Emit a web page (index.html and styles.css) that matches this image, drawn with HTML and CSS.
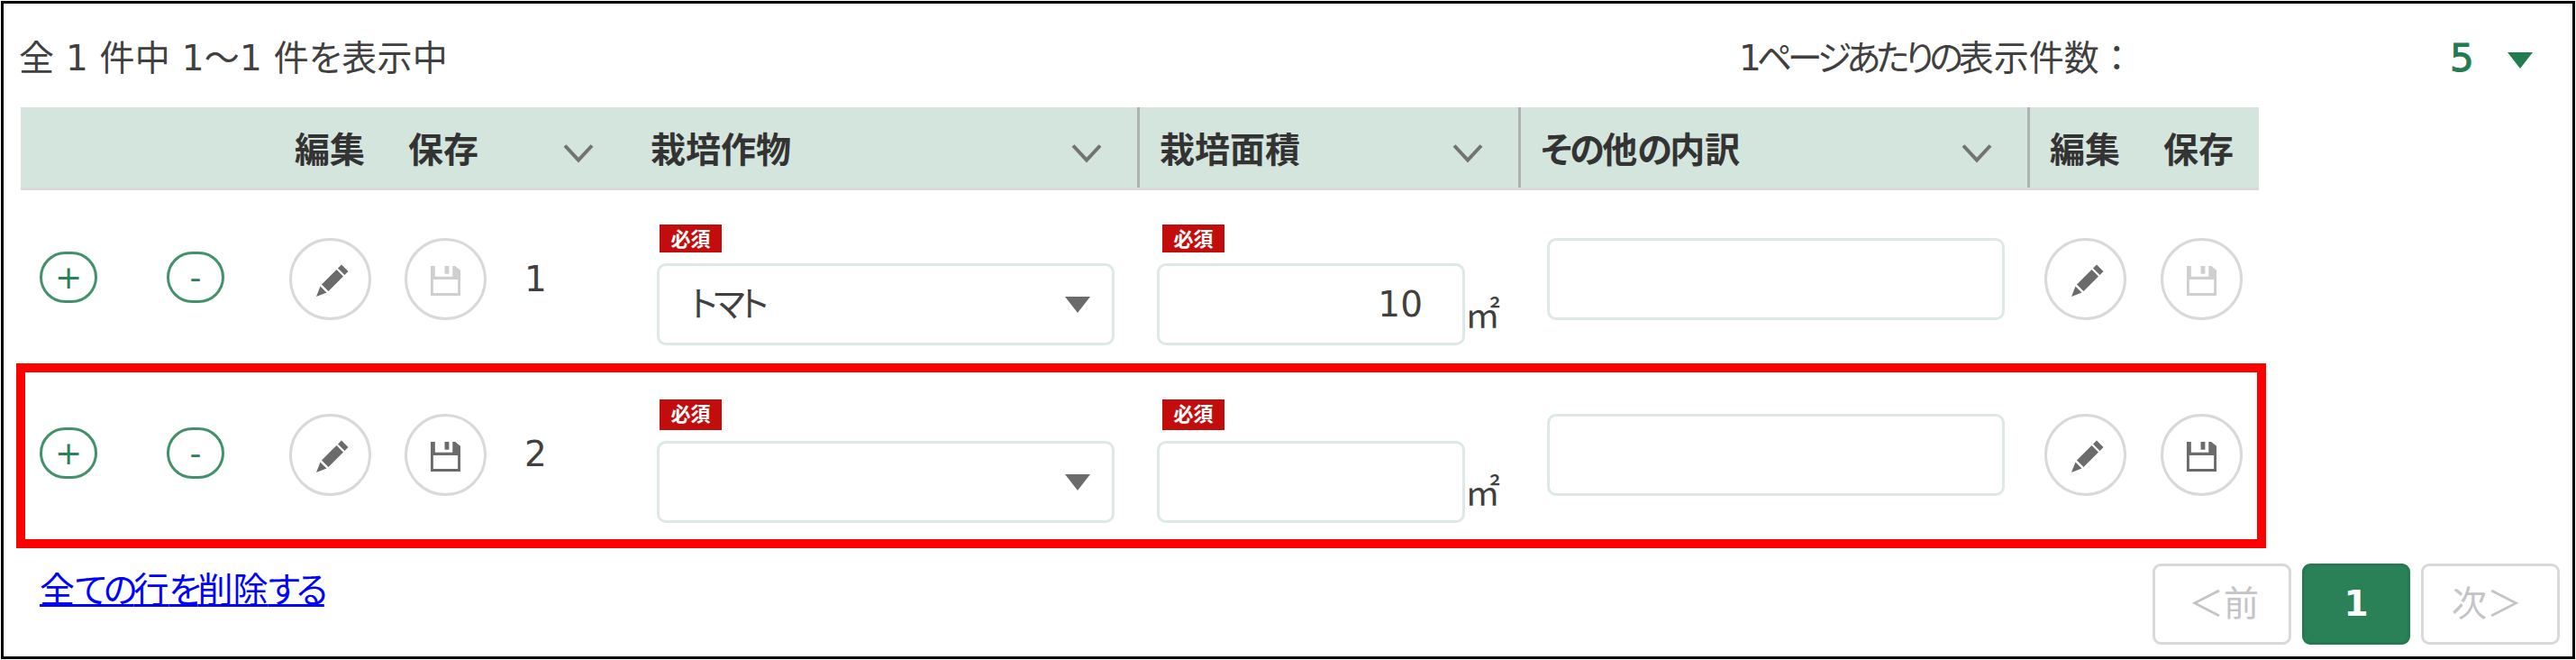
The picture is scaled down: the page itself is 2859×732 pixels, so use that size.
FILE: index.html
```html
<!DOCTYPE html>
<html lang="ja">
<head>
<meta charset="utf-8">
<title>栽培作物一覧</title>
<link rel="stylesheet" href="styles.css">
</head>
<body>
<svg class="symbols" width="0" height="0" aria-hidden="true">
  <symbol id="pencil" viewBox="0 0 38 38">
    <path d="M29 1.5 L36.5 9 L32.5 13 L25 5.5 Z M23.5 7 L31 14.500 L14.500 31 L7 23.500 Z M5.500 25.500 L12.500 32.500 L1 37 Z"/>
  </symbol>
  <symbol id="floppy" viewBox="0 0 36 36">
    <path fill-rule="evenodd" d="M1 1 H6 V13 H26 V1 H29 L35 6 V35 H1 Z M4 16.500 V32 H32 V16.500 Z"/>
    <path d="M17 1 H22 V10 H17 Z"/>
  </symbol>
  <symbol id="chevron" viewBox="0 0 34 22">
    <path class="chevron-line" d="M2 2.500 L17 18.500 L32 2.500"/>
  </symbol>
  <symbol id="triangle" viewBox="0 0 28 18">
    <path d="M0 0 H28 L14 18 Z"/>
  </symbol>
</svg>
<main class="panel">
  <div class="toolbar">
    <p class="summary">全 1 件中 1～1 件を表示中</p>
    <p class="per-page"><span class="kana">1ページあたりの</span>表示件数：</p>
    <div class="page-size"><span>5</span><svg class="tri"><use href="#triangle"/></svg></div>
  </div>

  <div class="table-head">
    <span class="th">編集</span>
    <span class="th">保存</span>
    <svg class="chev"><use href="#chevron"/></svg>
    <div class="th sortable crop"><span>栽培作物</span><svg class="chev"><use href="#chevron"/></svg></div>
    <div class="th sortable area"><span>栽培面積</span><svg class="chev"><use href="#chevron"/></svg></div>
    <div class="th sortable other"><span><span class="kana">その</span>他<span class="kana">の</span>内訳</span><svg class="chev"><use href="#chevron"/></svg></div>
    <span class="th edit-end">編集</span>
    <span class="th">保存</span>
  </div>

  <div class="row">
    <button class="round">+</button>
    <button class="round">-</button>
    <button class="icon-btn"><svg class="i-pencil"><use href="#pencil"/></svg></button>
    <button class="icon-btn disabled"><svg class="i-floppy"><use href="#floppy"/></svg></button>
    <span class="number">1</span>
    <div class="field">
      <span class="badge">必須</span>
      <div class="box select"><span class="kana">トマト</span><svg class="tri"><use href="#triangle"/></svg></div>
    </div>
    <div class="field">
      <span class="badge shifted">必須</span>
      <div class="with-unit"><div class="box amount">10</div><span class="unit">㎡</span></div>
    </div>
    <div class="box free"></div>
    <button class="icon-btn"><svg class="i-pencil"><use href="#pencil"/></svg></button>
    <button class="icon-btn disabled"><svg class="i-floppy"><use href="#floppy"/></svg></button>
  </div>

  <div class="row second">
    <button class="round">+</button>
    <button class="round">-</button>
    <button class="icon-btn"><svg class="i-pencil"><use href="#pencil"/></svg></button>
    <button class="icon-btn"><svg class="i-floppy"><use href="#floppy"/></svg></button>
    <span class="number">2</span>
    <div class="field">
      <span class="badge">必須</span>
      <div class="box select"><span></span><svg class="tri"><use href="#triangle"/></svg></div>
    </div>
    <div class="field">
      <span class="badge shifted">必須</span>
      <div class="with-unit"><div class="box amount"></div><span class="unit">㎡</span></div>
    </div>
    <div class="box free"></div>
    <button class="icon-btn"><svg class="i-pencil"><use href="#pencil"/></svg></button>
    <button class="icon-btn"><svg class="i-floppy"><use href="#floppy"/></svg></button>
    <div class="highlight"></div>
  </div>

  <div class="footer">
    <a class="delete-all" href="#">全<span class="kana">ての</span>行<span class="kana">を</span>削除<span class="kana">する</span></a>
    <nav class="pager">
      <span class="page prev">＜前</span>
      <span class="page current">1</span>
      <span class="page next">次＞</span>
    </nav>
  </div>
</main>
</body>
</html>
```

FILE: styles.css
```css
* { box-sizing: border-box; }

html { height: 732px; overflow: hidden; }

body {
  margin: 0;
  padding: 1px;
  width: 2859px;
  height: 732px;
  overflow: hidden;
  background: #fff;
  font-family: "DejaVu Sans", "Noto Sans CJK JP", sans-serif;
  font-size: 39px;
  line-height: 50px;
  color: #404040;
}

p { margin: 0; }
.symbols { position: absolute; }
.kana { font-feature-settings: "palt"; letter-spacing: -4px; }

.panel {
  width: 2857px;
  height: 730px;
  border: 3px solid #000;
  padding-left: 19px;
}

/* toolbar */
.toolbar {
  display: flex;
  height: 115px;
  padding-top: 36px;
  white-space: nowrap;
}
.summary {
  width: 1909px;
  margin-left: -2px;
  font-feature-settings: "palt";
  letter-spacing: 0.25px;
}
.per-page { width: 789px; }
.per-page .kana { letter-spacing: -5.2px; }
.page-size {
  display: flex;
  font-size: 42px;
  color: #237b4f;
  -webkit-text-stroke: 1px #237b4f;
}
.tri { width: 28px; height: 18px; fill: #6b6b6b; flex: none; }
.page-size .tri { margin: 18px 0 0 37px; fill: #237b4f; }

/* table header */
.table-head {
  display: grid;
  grid-template-columns: 126px 172px 97px 543px 423px 565px 148px 106px;
  align-items: center;
  width: 2484px;
  height: 92px;
  padding-left: 304px;
  background: #d4e5dd;
  border-bottom: 3px solid #d9d9d7;
}
.th { font-weight: bold; color: #333; white-space: nowrap; }
.th:not(.sortable), .sortable > span { padding-top: 6px; }
.chev { width: 34px; height: 22px; margin-top: 13px; flex: none; }
.chevron-line { fill: none; stroke: #737373; stroke-width: 4; }
.sortable {
  display: flex;
  align-items: center;
  justify-content: space-between;
  height: 89px;
  padding-right: 39px;
  border-right: 3px solid #b0b2b1;
}
.area { padding-left: 22px; }
.other { padding-left: 22px; }
.th .kana { letter-spacing: -2.5px; }
.edit-end { padding-left: 22px; }

/* rows */
.row {
  position: relative;
  display: grid;
  grid-template-columns: 141px 136px 128px 136px 144px 555px 433px 552px 129px 91px;
  align-items: start;
  height: 195px;
  padding: 53px 0 0 21px;
}
button {
  display: flex;
  align-items: center;
  justify-content: center;
  padding: 0;
  background: #fff;
  font: inherit;
}
.round {
  width: 64px;
  height: 57px;
  margin-top: 15px;
  border: 3px solid #42916a;
  border-radius: 29px;
  color: #2b8157;
  font-size: 36px;
}
.icon-btn {
  width: 91px;
  height: 91px;
  border: 3px solid #d9d9d9;
  border-radius: 50%;
}
.i-pencil { width: 38px; height: 38px; fill: #6b6b6b; margin-top: 3px; margin-left: 4px; }
.i-floppy { width: 35px; height: 35px; fill: #6b6b6b; margin-top: 3px; }
.disabled .i-floppy { fill: #cfcfcf; }
.number { margin: 21px 0 0 -3px; }

.field { display: flex; flex-direction: column; margin-top: -15px; }
.badge {
  width: 69px;
  height: 31px;
  margin: 0 0 12px 3px;
  background: #c30d0d;
  color: #fff;
  font-size: 22px;
  font-weight: bold;
  line-height: 33px;
  text-align: center;
}
.badge.shifted { margin-left: 6px; }
.box {
  height: 91px;
  border: 3px solid #dce9e4;
  border-radius: 10px;
  background: #fff;
}
.select {
  display: flex;
  align-items: center;
  justify-content: space-between;
  width: 508px;
  padding: 0 24px 0 34px;
}
.with-unit { display: flex; }
.amount {
  width: 342px;
  padding: 18px 44px 0 0;
  text-align: right;
}
.unit { margin-top: 33px; }
.free { width: 508px; }
.second .badge { height: 34px; margin-bottom: 12px; }
.second .field { margin-top: -16px; }
.second .number { margin-top: 20px; }

.highlight {
  position: absolute;
  left: -5px;
  top: -3px;
  width: 2497px;
  height: 205px;
  border: 10px solid #f00;
}

/* footer */
.footer { display: flex; justify-content: space-between; padding: 24px 14px 0 21px; }
.delete-all {
  margin-top: 5px;
  color: #00f;
  text-decoration-thickness: 3px;
}
.pager { display: flex; gap: 12px; }
.page {
  width: 154px;
  height: 90px;
  border: 3px solid #d9d9d9;
  border-radius: 9px;
  line-height: 84px;
  text-align: center;
  color: #c4c4c8;
}
.prev { padding-left: 4px; }
.next { padding-right: 8px; }
.current {
  width: 120px;
  background: #2b8157;
  border-color: #237b4f;
  color: #fff;
  font-weight: bold;
}
```
